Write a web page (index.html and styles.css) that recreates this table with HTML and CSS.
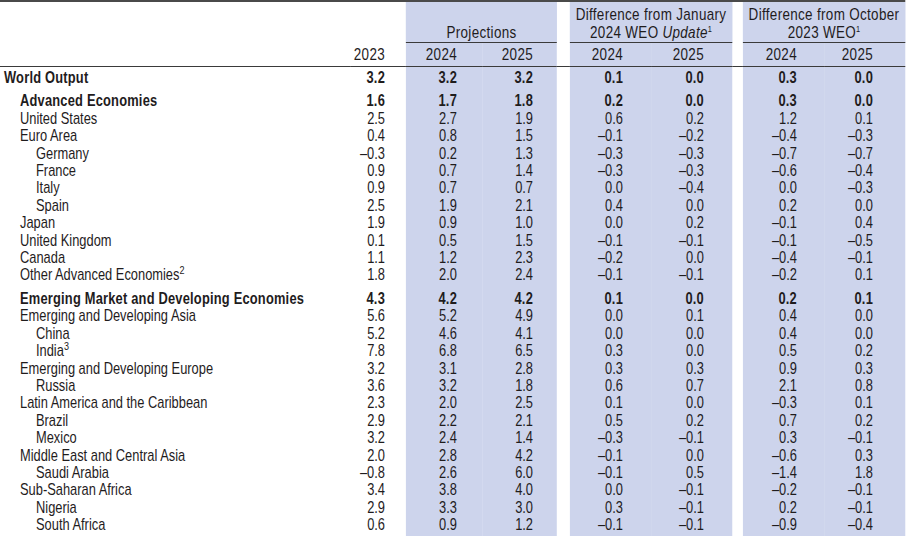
FILE: index.html
```html
<!DOCTYPE html>
<html lang="en">
<head>
  <meta charset="UTF-8">
  <meta name="viewport" content="width=device-width, initial-scale=1.0">
  <title>World Economic Outlook Growth Projections</title>
  <link rel="stylesheet" href="styles.css">
</head>
<body>

  <!-- Growth table -->
  <div class="sheet">
  <table class="weo">
    <colgroup>
      <col class="c-label">
      <col class="c-num">
      <col class="c-p24 band">
      <col class="c-p25 band">
      <col class="c-gap1">
      <col class="c-diff band">
      <col class="c-diff band">
      <col class="c-gap2">
      <col class="c-diff band">
      <col class="c-diff band">
    </colgroup>
    <thead>
      <tr class="head-groups">
        <th></th>
        <th></th>
        <th colspan="2" class="group">Projections</th>
        <th></th>
        <th colspan="2" class="group">Difference from January<br>2024 WEO <i>Update</i><sup>1</sup></th>
        <th></th>
        <th colspan="2" class="group">Difference from October<br>2023 WEO<sup>1</sup></th>
      </tr>
      <tr class="head-years">
        <th></th>
        <th>2023</th>
        <th>2024</th>
        <th>2025</th>
        <th></th>
        <th>2024</th>
        <th>2025</th>
        <th></th>
        <th>2024</th>
        <th>2025</th>
      </tr>
    </thead>
    <tbody>
      <tr class="bold first">
        <td class="l0">World Output</td><td>3.2</td><td>3.2</td><td>3.2</td><td></td><td>0.1</td><td>0.0</td><td></td><td>0.3</td><td>0.0</td>
      </tr>
      <tr class="bold spaced">
        <td class="l1">Advanced Economies</td><td>1.6</td><td>1.7</td><td>1.8</td><td></td><td>0.2</td><td>0.0</td><td></td><td>0.3</td><td>0.0</td>
      </tr>
      <tr>
        <td class="l1">United States</td><td>2.5</td><td>2.7</td><td>1.9</td><td></td><td>0.6</td><td>0.2</td><td></td><td>1.2</td><td>0.1</td>
      </tr>
      <tr>
        <td class="l1">Euro Area</td><td>0.4</td><td>0.8</td><td>1.5</td><td></td><td>–0.1</td><td>–0.2</td><td></td><td>–0.4</td><td>–0.3</td>
      </tr>
      <tr>
        <td class="l2">Germany</td><td>–0.3</td><td>0.2</td><td>1.3</td><td></td><td>–0.3</td><td>–0.3</td><td></td><td>–0.7</td><td>–0.7</td>
      </tr>
      <tr>
        <td class="l2">France</td><td>0.9</td><td>0.7</td><td>1.4</td><td></td><td>–0.3</td><td>–0.3</td><td></td><td>–0.6</td><td>–0.4</td>
      </tr>
      <tr>
        <td class="l2">Italy</td><td>0.9</td><td>0.7</td><td>0.7</td><td></td><td>0.0</td><td>–0.4</td><td></td><td>0.0</td><td>–0.3</td>
      </tr>
      <tr>
        <td class="l2">Spain</td><td>2.5</td><td>1.9</td><td>2.1</td><td></td><td>0.4</td><td>0.0</td><td></td><td>0.2</td><td>0.0</td>
      </tr>
      <tr>
        <td class="l1">Japan</td><td>1.9</td><td>0.9</td><td>1.0</td><td></td><td>0.0</td><td>0.2</td><td></td><td>–0.1</td><td>0.4</td>
      </tr>
      <tr>
        <td class="l1">United Kingdom</td><td>0.1</td><td>0.5</td><td>1.5</td><td></td><td>–0.1</td><td>–0.1</td><td></td><td>–0.1</td><td>–0.5</td>
      </tr>
      <tr>
        <td class="l1">Canada</td><td>1.1</td><td>1.2</td><td>2.3</td><td></td><td>–0.2</td><td>0.0</td><td></td><td>–0.4</td><td>–0.1</td>
      </tr>
      <tr>
        <td class="l1">Other Advanced Economies<sup>2</sup></td><td>1.8</td><td>2.0</td><td>2.4</td><td></td><td>–0.1</td><td>–0.1</td><td></td><td>–0.2</td><td>0.1</td>
      </tr>
      <tr class="bold spaced">
        <td class="l1">Emerging Market and Developing Economies</td><td>4.3</td><td>4.2</td><td>4.2</td><td></td><td>0.1</td><td>0.0</td><td></td><td>0.2</td><td>0.1</td>
      </tr>
      <tr>
        <td class="l1">Emerging and Developing Asia</td><td>5.6</td><td>5.2</td><td>4.9</td><td></td><td>0.0</td><td>0.1</td><td></td><td>0.4</td><td>0.0</td>
      </tr>
      <tr>
        <td class="l2">China</td><td>5.2</td><td>4.6</td><td>4.1</td><td></td><td>0.0</td><td>0.0</td><td></td><td>0.4</td><td>0.0</td>
      </tr>
      <tr>
        <td class="l2">India<sup>3</sup></td><td>7.8</td><td>6.8</td><td>6.5</td><td></td><td>0.3</td><td>0.0</td><td></td><td>0.5</td><td>0.2</td>
      </tr>
      <tr>
        <td class="l1">Emerging and Developing Europe</td><td>3.2</td><td>3.1</td><td>2.8</td><td></td><td>0.3</td><td>0.3</td><td></td><td>0.9</td><td>0.3</td>
      </tr>
      <tr>
        <td class="l2">Russia</td><td>3.6</td><td>3.2</td><td>1.8</td><td></td><td>0.6</td><td>0.7</td><td></td><td>2.1</td><td>0.8</td>
      </tr>
      <tr>
        <td class="l1">Latin America and the Caribbean</td><td>2.3</td><td>2.0</td><td>2.5</td><td></td><td>0.1</td><td>0.0</td><td></td><td>–0.3</td><td>0.1</td>
      </tr>
      <tr>
        <td class="l2">Brazil</td><td>2.9</td><td>2.2</td><td>2.1</td><td></td><td>0.5</td><td>0.2</td><td></td><td>0.7</td><td>0.2</td>
      </tr>
      <tr>
        <td class="l2">Mexico</td><td>3.2</td><td>2.4</td><td>1.4</td><td></td><td>–0.3</td><td>–0.1</td><td></td><td>0.3</td><td>–0.1</td>
      </tr>
      <tr>
        <td class="l1">Middle East and Central Asia</td><td>2.0</td><td>2.8</td><td>4.2</td><td></td><td>–0.1</td><td>0.0</td><td></td><td>–0.6</td><td>0.3</td>
      </tr>
      <tr>
        <td class="l2">Saudi Arabia</td><td>–0.8</td><td>2.6</td><td>6.0</td><td></td><td>–0.1</td><td>0.5</td><td></td><td>–1.4</td><td>1.8</td>
      </tr>
      <tr>
        <td class="l1">Sub-Saharan Africa</td><td>3.4</td><td>3.8</td><td>4.0</td><td></td><td>0.0</td><td>–0.1</td><td></td><td>–0.2</td><td>–0.1</td>
      </tr>
      <tr>
        <td class="l2">Nigeria</td><td>2.9</td><td>3.3</td><td>3.0</td><td></td><td>0.3</td><td>–0.1</td><td></td><td>0.2</td><td>–0.1</td>
      </tr>
      <tr class="last">
        <td class="l2">South Africa</td><td>0.6</td><td>0.9</td><td>1.2</td><td></td><td>–0.1</td><td>–0.1</td><td></td><td>–0.9</td><td>–0.4</td>
      </tr>
    </tbody>
  </table>
  </div>

</body>
</html>
```

FILE: styles.css
```css
  /* the source uses a condensed face; no narrow font is installed,
     so the table is laid out wide and squeezed horizontally */
  :root {
    --sx: 0.82;
  }

  body {
    margin: 0;
    padding: 0;
    background-color: #fff;
    color: #1f1c1d;
    font-family: "Liberation Sans", Arial, sans-serif;
    font-size: 15.7px;
  }

  .sheet {
    width: 906px;
    height: 536px;
    overflow: hidden;
  }

  .weo {
    width: calc(905px / var(--sx));
    table-layout: fixed;
    border-collapse: separate;
    border-spacing: 0;
    border-top: 2px solid #4a4a4a;
    transform: scaleX(var(--sx));
    transform-origin: 0 0;
  }

  /* column widths (in screen px, before the squeeze) */
  .c-label { width: calc(350px / var(--sx)); }
  .c-num { width: calc(56px / var(--sx)); }
  .c-p24 { width: calc(76px / var(--sx)); }
  .c-p25 { width: calc(75px / var(--sx)); }
  .c-gap1 { width: calc(13px / var(--sx)); }
  .c-gap2 { width: calc(11px / var(--sx)); }
  .c-diff { width: calc(81px / var(--sx)); }

  .band {
    background-color: #cdd4ec;
  }

  th {
    font-weight: normal;
    font-size: 16.4px;
    letter-spacing: 0.4px;
    padding: 0;
    line-height: 18px;
    white-space: nowrap;
  }

  .head-groups th {
    vertical-align: bottom;
    padding-top: 3px;
    padding-bottom: 1px;
  }

  .head-groups .group {
    background-color: #cdd4ec;
    text-align: center;
    border-bottom: 1px solid #3a3a3a;
  }

  .head-years th {
    text-align: right;
    padding-top: 2px;
    padding-bottom: 3px;
    border-bottom: 1px solid #3a3a3a;
  }

  sup {
    font-size: 11px;
    line-height: 0;
    vertical-align: 6px;
  }

  .group sup {
    font-size: 9px;
    letter-spacing: 0;
  }

  td {
    padding: 0;
    line-height: 17.4px;
    text-align: right;
    white-space: nowrap;
  }

  td:first-child {
    text-align: left;
  }

  /* numbers sit at the right edge of each column */
  tr > :nth-child(2) { padding-right: calc(21px / var(--sx)); }
  tr > :nth-child(3) { padding-right: calc(25px / var(--sx)); }
  tr > :nth-child(4) { padding-right: calc(24px / var(--sx)); }
  tr > :nth-child(6) { padding-right: calc(28px / var(--sx)); }
  tr > :nth-child(7) { padding-right: calc(28px / var(--sx)); }
  tr > :nth-child(9) { padding-right: calc(27px / var(--sx)); }
  tr > :nth-child(10) { padding-right: calc(32px / var(--sx)); }
  .head-groups > th { padding-right: 0; }
  .head-years > th:nth-child(n+3) { margin-right: -2px; }

  .l0 { padding-left: calc(4px / var(--sx)); }
  .l1 { padding-left: calc(20px / var(--sx)); }
  .l2 { padding-left: calc(36px / var(--sx)); }

  .bold td {
    font-weight: bold;
    letter-spacing: 0.25px;
  }

  .first td { padding-top: 2px; }
  .spaced td { padding-top: 6px; }
  .last td { padding-bottom: 20px; }
```
